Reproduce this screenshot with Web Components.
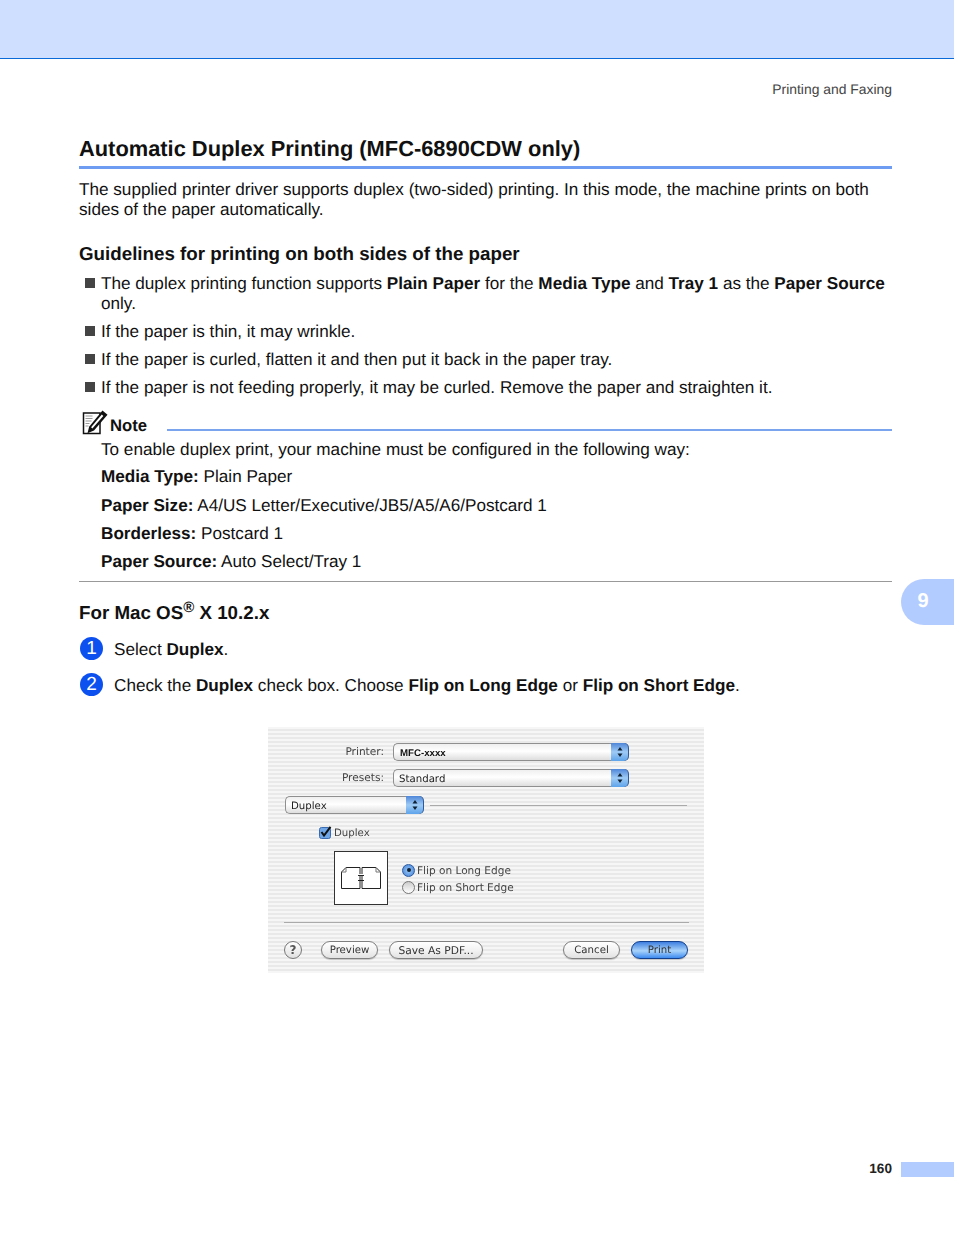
<!DOCTYPE html>
<html>
<head>
<meta charset="utf-8">
<title>Printing and Faxing</title>
<style>
  html, body { margin: 0; padding: 0; background: #fff; }
  body { font-family: "Liberation Sans", Arial, sans-serif; color: #000; text-rendering: geometricPrecision; }
</style>
</head>
<body>
<manual-page>
  <page-section-title>Automatic Duplex Printing (MFC-6890CDW only)</page-section-title>
  <body-text>The supplied printer driver supports duplex (two-sided) printing. In this mode, the machine prints on both sides of the paper automatically.</body-text>
  <sub-heading top="24">Guidelines for printing on both sides of the paper</sub-heading>
  <bullet-item>The duplex printing function supports <b>Plain Paper</b> for the <b>Media Type</b> and <b>Tray 1</b> as the <b>Paper Source</b> only.</bullet-item>
  <bullet-item>If the paper is thin, it may wrinkle.</bullet-item>
  <bullet-item>If the paper is curled, flatten it and then put it back in the paper tray.</bullet-item>
  <bullet-item>If the paper is not feeding properly, it may be curled. Remove the paper and straighten it.</bullet-item>
  <note-box>
    <div>To enable duplex print, your machine must be configured in the following way:</div>
    <div><b>Media Type:</b> Plain Paper</div>
    <div><b>Paper Size:</b> A4/US Letter/Executive/JB5/A5/A6/Postcard 1</div>
    <div><b>Borderless:</b> Postcard 1</div>
    <div><b>Paper Source:</b> Auto Select/Tray 1</div>
  </note-box>
  <sub-heading top="20">For Mac OS<sup>®</sup> X 10.2.x</sub-heading>
  <step-item num="1">Select <b>Duplex</b>.</step-item>
  <step-item num="2">Check the <b>Duplex</b> check box. Choose <b>Flip on Long Edge</b> or <b>Flip on Short Edge</b>.</step-item>
  <print-dialog></print-dialog>
</manual-page>

<script>
// page shell: band, running head, content column, chapter tab, folio
class ManualPage extends HTMLElement {
  connectedCallback() {
    this.attachShadow({ mode: 'open' });
    this.shadowRoot.innerHTML = `
      <style>
        :host { display: flex; flex-direction: column; position: relative; width: 954px; height: 1235px; overflow: hidden; }
        .band { height: 58px; background: #cfdfff; border-bottom: 1px solid #0a6ad8; flex: none; }
        .head { margin: 22px 62px 0 0; text-align: right; font-size: 13.9px; line-height: 16px; color: #444; flex: none; }
        .content { margin: 39px 62px 0 79px; flex: 1; }
        .tab { position: absolute; left: 901px; top: 579px; width: 53px; height: 46px; box-sizing: border-box; padding-right: 9px; padding-bottom: 2px;
               background: #b3ccff; border-radius: 23px 0 0 23px; color: #fff; font-weight: bold; font-size: 20px;
               display: flex; align-items: center; justify-content: center; }
        .foot { display: flex; justify-content: flex-end; align-items: center; gap: 9px; height: 15px; margin-bottom: 58px; flex: none; }
        .foot b { font-size: 13.6px; color: #222; margin-top: -3px; }
        .foot i { display: block; width: 53px; height: 15px; background: #b3ccff; }
      </style>
      <div class="band"></div>
      <div class="head">Printing and Faxing</div>
      <div class="content"><slot></slot></div>
      <div class="tab">9</div>
      <div class="foot"><b>160</b><i></i></div>`;
  }
}
class PageSectionTitle extends HTMLElement {
  connectedCallback() {
    this.attachShadow({ mode: 'open' });
    this.shadowRoot.innerHTML = `
      <style>
        :host { display: block; font-size: 21.85px; line-height: 26px; font-weight: bold; color: #111; border-bottom: 3px solid #6d9cf2; padding-bottom: 4px; }
      </style><slot></slot>`;
  }
}
class BodyText extends HTMLElement {
  connectedCallback() {
    this.attachShadow({ mode: 'open' });
    this.shadowRoot.innerHTML = `
      <style>
        :host { display: block; font-size: 17.15px; line-height: 20px; margin-top: 10px; color: #111; }
      </style><slot></slot>`;
  }
}
class SubHeading extends HTMLElement {
  connectedCallback() {
    const top = this.getAttribute('top') || 20;
    this.attachShadow({ mode: 'open' });
    this.shadowRoot.innerHTML = `
      <style>
        :host { display: block; font-size: 18.75px; line-height: 22px; font-weight: bold; color: #111; margin-top: ${top}px; }
        ::slotted(sup) { font-size: 15px; line-height: 0; }
      </style><slot></slot>`;
  }
}
class BulletItem extends HTMLElement {
  connectedCallback() {
    this.attachShadow({ mode: 'open' });
    this.shadowRoot.innerHTML = `
      <style>
        :host { display: flex; font-size: 17.15px; line-height: 20px; color: #111; margin-top: 8px; padding-left: 6px; }
        i { flex: none; width: 10px; height: 10px; background: #444; margin: 5px 6px 0 0; }
      </style><i></i><div><slot></slot></div>`;
  }
}
class NoteBox extends HTMLElement {
  connectedCallback() {
    this.attachShadow({ mode: 'open' });
    this.shadowRoot.innerHTML = `
      <style>
        :host { display: block; margin-top: 13px; border-bottom: 1px solid #999; padding-bottom: 10px; }
        .top { display: flex; align-items: flex-end; height: 26px; }
        svg { flex: none; margin: 0 0 1px 3px; }
        .label { font-size: 16.7px; line-height: 19px; font-weight: bold; color: #111; margin: 0 0 1px 2px; }
        .rule { flex: 1; height: 0; border-top: 2px solid #7ba4ef; margin: 0 0 5px 20px; }
        .body { margin-left: 22px; font-size: 17.15px; line-height: 20px; color: #111; display: flex; flex-direction: column; gap: 8.3px; padding-top: 3px; }
        ::slotted(div:first-child) { margin-bottom: -1px; }
      </style>
      <div class="top">
        <svg width="26" height="25" viewBox="0 0 26 25">
          <path d="M1.5 3H18V23.5H1.5Z" fill="#fff" stroke="#111" stroke-width="1.5"/>
          <path d="M3.5 6h7M3.5 8.5h7M3.5 11h6M3.5 13.5h4M3.5 16h3" stroke="#999" stroke-width="1"/>
          <path d="M20.5 .5L25.5 4.8 12 20.5l-6.5 2.8 1.6-6.6Z" fill="#111"/>
          <path d="M19.8 4.6l1.5 1.3L10.4 18.4l-1.3-1.2Z" fill="#fff"/>
        </svg>
        <div class="label">Note</div>
        <div class="rule"></div>
      </div>
      <div class="body"><slot></slot></div>`;
  }
}
class StepItem extends HTMLElement {
  connectedCallback() {
    const n = this.getAttribute('num');
    this.attachShadow({ mode: 'open' });
    this.shadowRoot.innerHTML = `
      <style>
        :host { display: flex; align-items: center; height: 24px; margin-top: 12px; font-size: 17.15px; color: #111; }
        .n { flex: none; width: 23px; height: 23px; border-radius: 50%; background: #0c50f0; color: #fff; font-size: 19px; padding-top: 1px; box-sizing: border-box;
             display: flex; align-items: center; justify-content: center; margin: 0 11px 0 1px; }
        .t { padding-top: 2px; }
      </style><span class="n">${n}</span><div class="t"><slot></slot></div>`;
  }
}
// the OS X print sheet
class MacPopup extends HTMLElement {
  connectedCallback() {
    this.attachShadow({ mode: 'open' });
    this.shadowRoot.innerHTML = `
      <style>
        :host { display: flex; box-sizing: border-box; height: 18px; width: var(--w, 236px); align-items: stretch;
                border: 1px solid #8f8f8f; border-right: 0; border-radius: 5px;
                background: linear-gradient(#efefef, #fff 45%, #dedede); font-family: "DejaVu Sans", sans-serif; font-size: 10.2px; color: #222; }
        .t { flex: 1; padding: 2px 0 0 5px; line-height: 16px; }
        .a { flex: none; width: 17px; border-radius: 0 5px 5px 0; margin: -1px 0; background: linear-gradient(#4f86d8, #9ecbf6 50%, #5ea3ea); border-right: 1px solid #2e5b9c;
             display: flex; align-items: center; justify-content: center; }
      </style>
      <div class="t"><slot></slot></div>
      <div class="a"><svg width="6" height="12" viewBox="0 0 6 12"><path d="M3 1l2.5 3.5h-5zM3 11L.5 7.5h5z" fill="#123"/></svg></div>`;
  }
}
class MacButton extends HTMLElement {
  connectedCallback() {
    const main = this.hasAttribute('main');
    this.attachShadow({ mode: 'open' });
    this.shadowRoot.innerHTML = `
      <style>
        :host { display: flex; box-sizing: border-box; height: 18px; align-items: center; justify-content: center; width: var(--w, 57px);
                border: 1px solid ${main ? '#12408e' : '#7f7f7f'}; border-radius: 9px; font-family: "DejaVu Sans", sans-serif; font-size: 10.2px; color: #333;
                box-shadow: 0 1px 1px rgba(0,0,0,.2);
                background: ${main ? 'linear-gradient(#3f7fe0, #a9d3fa 55%, #3d8bf0)' : 'linear-gradient(#fff, #f3f3f3 50%, #e2e2e2)'}; }
      </style><slot></slot>`;
  }
}
class MacRadio extends HTMLElement {
  connectedCallback() {
    const on = this.hasAttribute('on');
    this.attachShadow({ mode: 'open' });
    this.shadowRoot.innerHTML = `
      <style>
        :host { display: flex; align-items: center; height: 17px; font-family: "DejaVu Sans", sans-serif; font-size: 10.55px; color: #444; }
        i { flex: none; box-sizing: border-box; width: 13px; height: 13px; border-radius: 50%; margin-right: 2px; display: flex; align-items: center; justify-content: center;
            border: 1px solid ${on ? '#2b5aa0' : '#777'}; background: ${on ? 'radial-gradient(#9ccaf6, #3f7fd8)' : 'linear-gradient(#ccc, #fff)'}; }
        u { display: ${on ? 'block' : 'none'}; width: 4px; height: 4px; border-radius: 50%; background: #123; }
        span { padding-top: 1.5px; }
      </style><i><u></u></i><span><slot></slot></span>`;
  }
}
class PrintDialog extends HTMLElement {
  connectedCallback() {
    this.attachShadow({ mode: 'open' });
    this.shadowRoot.innerHTML = `
      <style>
        :host { display: block; box-sizing: border-box; width: 436px; height: 246px; margin: 31px 0 0 189px; padding-top: 16px;
                background: repeating-linear-gradient(#f6f6f6 0 2px, #e9e9e9 2px 4px);
                font-family: "DejaVu Sans", sans-serif; font-size: 10.2px; color: #444; filter: blur(.35px); }
        .row { display: flex; align-items: center; height: 18px; }
        .lbl { width: 116px; text-align: right; margin-right: 9px; font-size: 10.6px; }
        .r1 { margin-bottom: 8px; }
        .r3 { margin-top: 9px; padding-left: 17px; gap: 6px; }
        .r3 hr, .sep { border: 0; border-top: 1px solid #aaa; margin: 0; }
        .r3 hr { width: 257px; }
        .check { margin: 11px 0 0 51px; height: 14px; display: flex; align-items: center; gap: 2px; }
        .check svg { flex: none; }
        .check span { padding-top: 2px; }
        .opts { display: flex; align-items: center; margin: 12px 0 0 66px; gap: 14px; }
        .pv { box-sizing: border-box; width: 54px; height: 54px; border: 1px solid #333; background: #fff; display: flex; align-items: center; justify-content: center; }
        .radios { display: flex; flex-direction: column; margin-top: 1px; }
        .sep { margin: 17px 15px 0 16px; }
        .btns { display: flex; align-items: center; margin: 18px 16px 0 16px; }
        .q { box-sizing: border-box; width: 18px; height: 18px; border-radius: 50%; border: 1px solid #777; background: linear-gradient(#fff, #e0e0e0);
             font-size: 12px; font-weight: bold; color: #555; display: flex; align-items: center; justify-content: center; margin-right: 19px; }
      </style>
      <div class="row r1"><span class="lbl">Printer:</span><mac-popup><span style="font:bold 9.7px 'Liberation Sans',sans-serif;color:#111;margin-left:1px">MFC-xxxx</span></mac-popup></div>
      <div class="row"><span class="lbl">Presets:</span><mac-popup>Standard</mac-popup></div>
      <div class="row r3"><mac-popup style="--w:139px">Duplex</mac-popup><hr></div>
      <div class="check">
        <svg width="13" height="13" viewBox="0 0 13 13"><rect x=".5" y="1.5" width="11" height="11" rx="2" fill="#6fa6e8" stroke="#3a6bb0"/><path d="M2.5 6l2.5 3.5L11.5 .8" fill="none" stroke="#111" stroke-width="2"/></svg>
        <span>Duplex</span>
      </div>
      <div class="opts">
        <div class="pv">
          <svg width="42" height="24" viewBox="0 0 42 24" fill="none" stroke="#222">
            <path d="M20 8V1.5H6L1.5 6V22.5H20V15"/>
            <path d="M6 1.5V6H1.5" stroke="#777"/>
            <path d="M22 8V1.5H36L40.5 6V22.5H22V15"/>
            <path d="M36 1.5V6H40.5" stroke="#777"/>
            <path d="M18 9.5H24M18 14.5H24M20 9.5V14.5M22 9.5V14.5"/>
          </svg>
        </div>
        <div class="radios">
          <mac-radio on>Flip on Long Edge</mac-radio>
          <mac-radio>Flip on Short Edge</mac-radio>
        </div>
      </div>
      <hr class="sep">
      <div class="btns">
        <span class="q">?</span>
        <mac-button>Preview</mac-button>
        <mac-button style="--w:94px;margin-left:11px;font-size:10.7px">Save As PDF...</mac-button>
        <mac-button style="margin-left:auto">Cancel</mac-button>
        <mac-button main style="margin-left:11px">Print</mac-button>
      </div>`;
  }
}
customElements.define('manual-page', ManualPage);
customElements.define('page-section-title', PageSectionTitle);
customElements.define('body-text', BodyText);
customElements.define('sub-heading', SubHeading);
customElements.define('bullet-item', BulletItem);
customElements.define('note-box', NoteBox);
customElements.define('step-item', StepItem);
customElements.define('mac-popup', MacPopup);
customElements.define('mac-button', MacButton);
customElements.define('mac-radio', MacRadio);
customElements.define('print-dialog', PrintDialog);
</script>
</body>
</html>
